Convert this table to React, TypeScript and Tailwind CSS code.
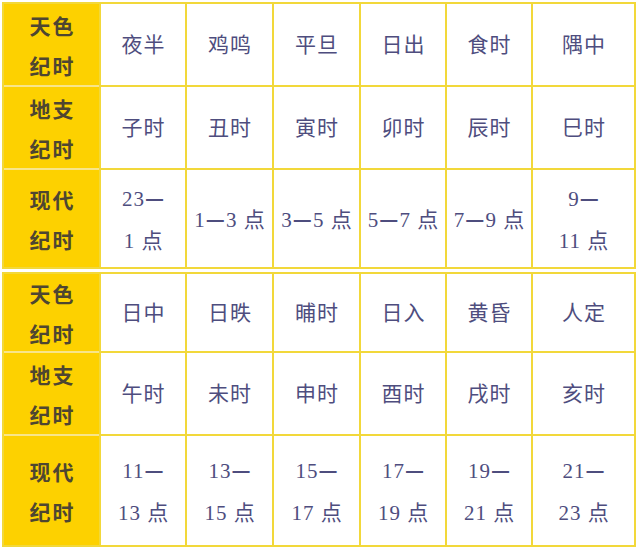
import React from "react";

type Row = { h: [string, string]; cells: string[][]; hc: string };

const table1: Row[] = [
  { h: ["天色", "纪时"], cells: [["夜半"], ["鸡鸣"], ["平旦"], ["日出"], ["食时"], ["隅中"]], hc: "h-[81px]" },
  { h: ["地支", "纪时"], cells: [["子时"], ["丑时"], ["寅时"], ["卯时"], ["辰时"], ["巳时"]], hc: "h-[81px]" },
  {
    h: ["现代", "纪时"],
    cells: [["23—", "1 点"], ["1—3 点"], ["3—5 点"], ["5—7 点"], ["7—9 点"], ["9—", "11 点"]],
    hc: "h-[97px]",
  },
];

const table2: Row[] = [
  { h: ["天色", "纪时"], cells: [["日中"], ["日昳"], ["晡时"], ["日入"], ["黄昏"], ["人定"]], hc: "h-[77px]" },
  { h: ["地支", "纪时"], cells: [["午时"], ["未时"], ["申时"], ["酉时"], ["戌时"], ["亥时"]], hc: "h-[81px]" },
  {
    h: ["现代", "纪时"],
    cells: [["11—", "13 点"], ["13—", "15 点"], ["15—", "17 点"], ["17—", "19 点"], ["19—", "21 点"], ["21—", "23 点"]],
    hc: "h-[109px]",
  },
];

const dataFont = { fontFamily: "'Liberation Serif', 'Noto Sans CJK SC', serif" };
const headFont = { fontFamily: "'Noto Sans CJK SC', sans-serif" };
const cjkFont = { fontFamily: "'Noto Sans CJK SC', sans-serif" };

function Line({ text }: { text: string }) {
  const parts = text.split("—");
  return (
    <div className="whitespace-pre">
      {parts.map((p, i) => (
        <React.Fragment key={i}>
          {i > 0 && (
            <span style={cjkFont} className="font-bold">
              —
            </span>
          )}
          {p}
        </React.Fragment>
      ))}
    </div>
  );
}

function Table({ rows, rowsClass }: { rows: Row[]; rowsClass: string }) {
  return (
    <div className="flex w-[634px] gap-[2px] bg-[#f2d83a] p-[2px]">
      <div className="flex w-[95px] flex-col gap-[2px] bg-[#f8e58a]">
        {rows.map((r, i) => (
          <div
            key={i}
            className={`${r.hc} flex flex-col items-center justify-center bg-[#fdd100] pl-[2px] text-[21px] font-bold leading-[40px] tracking-[2px] text-[#4e4631]`}
            style={headFont}
          >
            <div>{r.h[0]}</div>
            <div>{r.h[1]}</div>
          </div>
        ))}
      </div>
      <div className={`grid flex-1 grid-cols-[84px_85px_85px_84px_84px_1fr] gap-[2px] ${rowsClass}`}>
        {rows.flatMap((r, i) =>
          r.cells.map((c, j) => (
            <div
              key={`${i}-${j}`}
              className="flex flex-col items-center justify-center bg-white pl-[1px] text-[21px] leading-[42px] tracking-[1px] text-[#4e4d7e]"
              style={dataFont}
            >
              {c.map((line, k) => (
                <Line key={k} text={line} />
              ))}
            </div>
          ))
        )}
      </div>
    </div>
  );
}

export default function App() {
  return (
    <div className="h-[551px] w-[640px] bg-white pl-[2px] pt-[2px]">
      <Table rows={table1} rowsClass="grid-rows-[81px_81px_97px]" />
      <div className="h-[3px]" />
      <Table rows={table2} rowsClass="grid-rows-[77px_81px_109px]" />
    </div>
  );
}
